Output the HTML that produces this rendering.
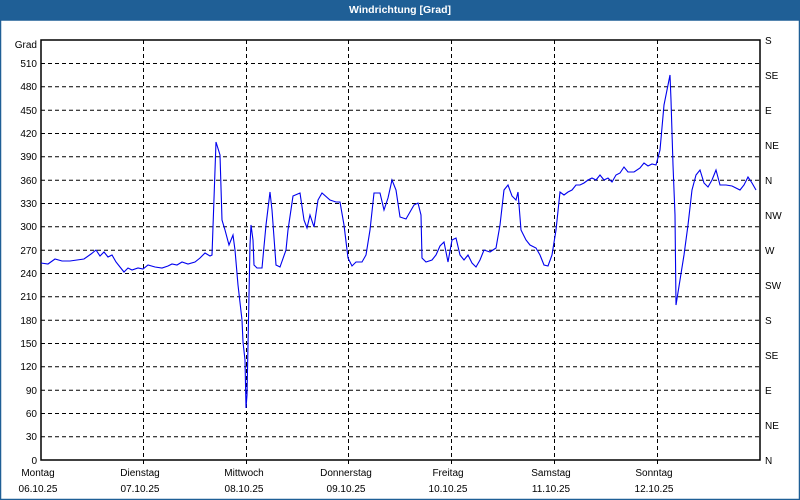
<!DOCTYPE html>
<html><head><meta charset="utf-8"><style>
html,body{margin:0;padding:0;background:#fff;}
body{width:800px;height:500px;overflow:hidden;font-family:"Liberation Sans",sans-serif;}
</style></head><body>
<svg width="800" height="500" xmlns="http://www.w3.org/2000/svg" style="display:block">
<rect x="0" y="0" width="800" height="500" fill="#fff"/>
<rect x="0" y="0" width="800" height="20" fill="#1f5f96"/>
<rect x="0.5" y="20" width="799" height="479.5" fill="none" stroke="#1f5f96" stroke-width="1.5"/>
<text x="400" y="13" fill="#fff" font-size="10.5" font-weight="bold" text-anchor="middle" font-family="Liberation Sans, sans-serif">Windrichtung [Grad]</text>
<g stroke="#000" stroke-width="1" stroke-dasharray="4,3">
<line x1="41" x2="760" y1="63.5" y2="63.5"/><line x1="41" x2="760" y1="86.8" y2="86.8"/><line x1="41" x2="760" y1="110.2" y2="110.2"/><line x1="41" x2="760" y1="133.5" y2="133.5"/><line x1="41" x2="760" y1="156.8" y2="156.8"/><line x1="41" x2="760" y1="180.2" y2="180.2"/><line x1="41" x2="760" y1="203.5" y2="203.5"/><line x1="41" x2="760" y1="226.8" y2="226.8"/><line x1="41" x2="760" y1="250.2" y2="250.2"/><line x1="41" x2="760" y1="273.5" y2="273.5"/><line x1="41" x2="760" y1="296.8" y2="296.8"/><line x1="41" x2="760" y1="320.2" y2="320.2"/><line x1="41" x2="760" y1="343.5" y2="343.5"/><line x1="41" x2="760" y1="366.8" y2="366.8"/><line x1="41" x2="760" y1="390.2" y2="390.2"/><line x1="41" x2="760" y1="413.5" y2="413.5"/><line x1="41" x2="760" y1="436.8" y2="436.8"/>
<line y1="40" y2="465" x1="143.5" x2="143.5"/><line y1="40" y2="465" x1="246.5" x2="246.5"/><line y1="40" y2="465" x1="348.5" x2="348.5"/><line y1="40" y2="465" x1="451.5" x2="451.5"/><line y1="40" y2="465" x1="554.5" x2="554.5"/><line y1="40" y2="465" x1="657.5" x2="657.5"/>
</g>
<rect x="41" y="40" width="719" height="420" fill="none" stroke="#000" stroke-width="1.5"/>
<polyline fill="none" stroke="#0000ee" stroke-width="1.1" points="41,263 48,264 55,259 62,261 70,261 77,260 84,259 91,254 96,250 100,256 104,252 108,257 112,255 116,262 120,267 124,272 128,268 132,270 138,268 143,269 148,265 155,267 162,268 168,266 172,264 177,265 182,262 188,264 195,262 200,258 205,253 210,256 212,255 216,142 220,155 222,220 225,230 229,245 233,235 235,250 238,285 242,320 243,342 245,360 246,408 247,395 248,345 249,295 250,245 251,225 253,240 254,265 257,268 262,268 266,225 270,192 272,210 276,265 280,267 286,250 288,230 293,196 300,193 304,220 307,228 310,215 314,227 318,200 322,193 330,200 336,202 340,202 344,225 348,258 352,266 356,262 362,262 366,255 370,230 374,193 380,193 384,210 388,198 392,180 396,190 400,217 406,219 410,212 414,205 418,203 421,215 422,258 426,262 432,260 436,255 440,246 444,242 448,262 452,240 456,238 460,255 464,260 468,255 472,263 476,267 480,260 484,250 490,252 496,248 500,225 504,190 508,185 512,196 516,200 518,192 521,230 526,240 530,245 536,248 540,255 544,265 548,266 552,255 556,230 560,192 564,195 568,192 572,190 576,185 580,185 584,183 588,180 592,178 596,180 600,175 604,180 608,178 612,182 616,175 620,173 624,167 628,172 634,172 640,168 644,163 648,166 652,164 656,165 660,150 664,105 667,90 670,75 671,100 673,165 675,215 676,305 680,280 684,255 688,225 692,190 696,175 700,170 704,183 708,187 712,180 716,170 720,185 726,185 732,186 740,190 744,185 748,177 752,183 756,190"/>
<g font-size="10" fill="#000" text-anchor="end" font-family="Liberation Sans, sans-serif">
<text x="37" y="48">Grad</text><text x="37" y="67">510</text><text x="37" y="90">480</text><text x="37" y="114">450</text><text x="37" y="137">420</text><text x="37" y="160">390</text><text x="37" y="184">360</text><text x="37" y="207">330</text><text x="37" y="230">300</text><text x="37" y="254">270</text><text x="37" y="277">240</text><text x="37" y="300">210</text><text x="37" y="324">180</text><text x="37" y="347">150</text><text x="37" y="370">120</text><text x="37" y="394">90</text><text x="37" y="417">60</text><text x="37" y="440">30</text><text x="37" y="464">0</text>
</g>
<g font-size="10" fill="#000" font-family="Liberation Sans, sans-serif">
<text x="765" y="44">S</text><text x="765" y="79">SE</text><text x="765" y="114">E</text><text x="765" y="149">NE</text><text x="765" y="184">N</text><text x="765" y="219">NW</text><text x="765" y="254">W</text><text x="765" y="289">SW</text><text x="765" y="324">S</text><text x="765" y="359">SE</text><text x="765" y="394">E</text><text x="765" y="429">NE</text><text x="765" y="464">N</text>
</g>
<g font-size="10" fill="#000" text-anchor="middle" font-family="Liberation Sans, sans-serif">
<text x="38" y="476">Montag</text><text x="38" y="492">06.10.25</text>
<text x="140" y="476">Dienstag</text><text x="140" y="492">07.10.25</text>
<text x="244" y="476">Mittwoch</text><text x="244" y="492">08.10.25</text>
<text x="346" y="476">Donnerstag</text><text x="346" y="492">09.10.25</text>
<text x="448" y="476">Freitag</text><text x="448" y="492">10.10.25</text>
<text x="551" y="476">Samstag</text><text x="551" y="492">11.10.25</text>
<text x="654" y="476">Sonntag</text><text x="654" y="492">12.10.25</text>
</g>
</svg>
</body></html>
